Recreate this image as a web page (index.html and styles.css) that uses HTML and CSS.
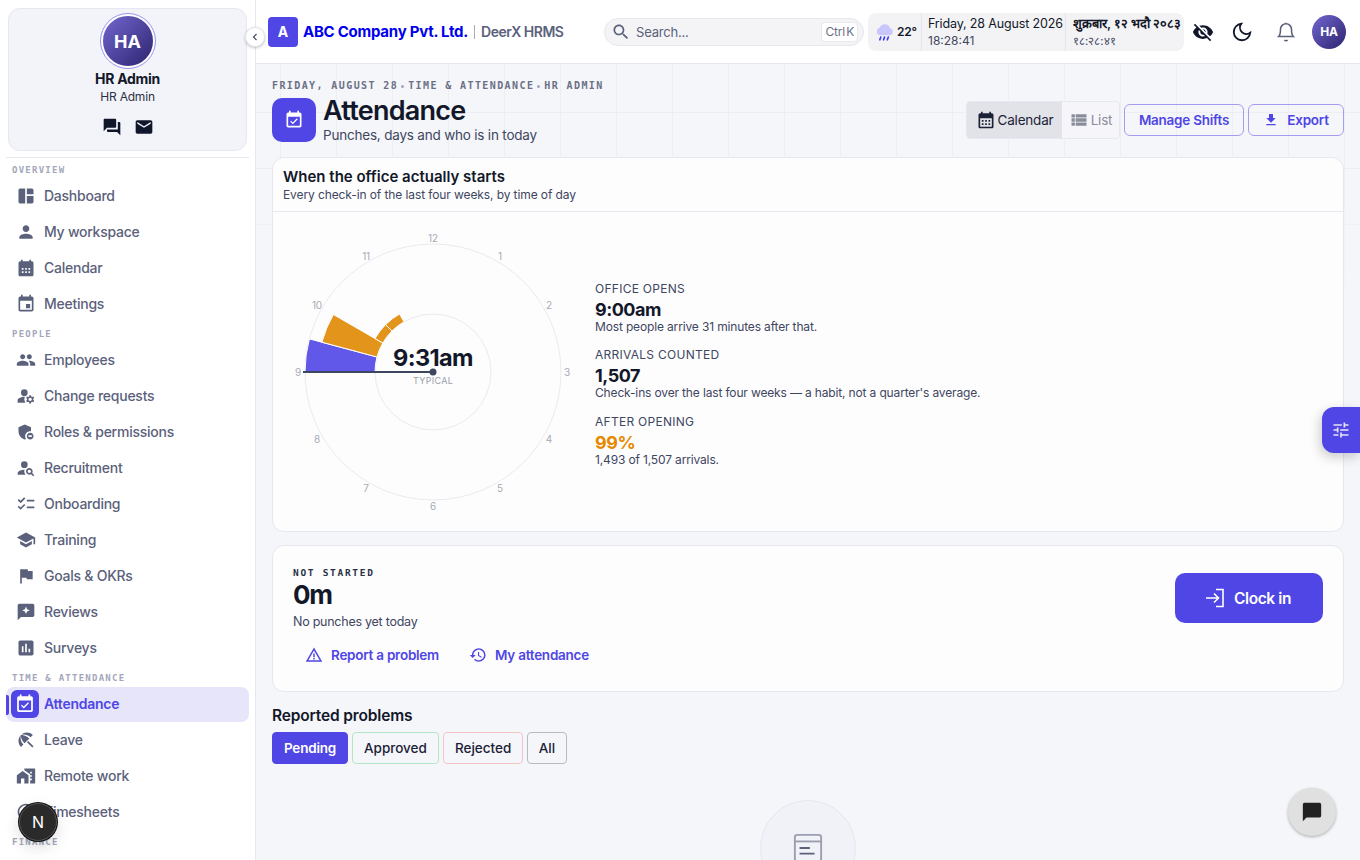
FILE: index.html
```html
<!DOCTYPE html>
<html lang="en">
<head>
<title>Attendance - DeerX HRMS</title>
<meta charset="UTF-8">
<meta name="viewport" content="width=device-width, initial-scale=1">
<link rel="stylesheet" href="styles.css">
</head>
<body>
<aside class="sidebar">
 <div class="profile">
  <div class="profile-avatar"><span>HA</span></div>
  <div class="profile-name">HR Admin</div>
  <div class="profile-role">HR Admin</div>
  <div class="profile-icons">
   <svg viewBox="0 0 24 24"><path d="M21 6h-2v9H6v2c0 .55.45 1 1 1h11l4 4V7c0-.55-.45-1-1-1zm-4 6V3c0-.55-.45-1-1-1H3c-.55 0-1 .45-1 1v14l4-4h10c.55 0 1-.45 1-1z"/></svg>
   <svg viewBox="0 0 24 24"><path d="M20 4H4c-1.1 0-1.99.9-1.99 2L2 18c0 1.1.9 2 2 2h16c1.1 0 2-.9 2-2V6c0-1.1-.9-2-2-2zm0 4l-8 5-8-5V6l8 5 8-5v2z"/></svg>
  </div>
 </div>
 <nav class="nav">
  <div class="nav-label first">OVERVIEW</div>
  <a class="nav-item"><svg class="nav-icon" viewBox="0 0 24 24"><path d="M11 21H5c-1.1 0-2-.9-2-2V5c0-1.1.9-2 2-2h6v18zm2 0h6c1.1 0 2-.9 2-2v-7h-8v9zm8-11V5c0-1.1-.9-2-2-2h-6v7h8z"/></svg>Dashboard</a>
  <a class="nav-item"><svg class="nav-icon" viewBox="0 0 24 24"><path d="M12 12c2.21 0 4-1.79 4-4s-1.79-4-4-4-4 1.79-4 4 1.79 4 4 4zm0 2c-2.67 0-8 1.34-8 4v2h16v-2c0-2.66-5.33-4-8-4z"/></svg>My workspace</a>
  <a class="nav-item"><svg class="nav-icon" viewBox="0 0 24 24"><path d="M19 4h-1V2h-2v2H8V2H6v2H5c-1.11 0-1.99.9-1.99 2L3 20c0 1.1.89 2 2 2h14c1.1 0 2-.9 2-2V6c0-1.1-.9-2-2-2zM9 14H7v-2h2v2zm4 0h-2v-2h2v2zm4 0h-2v-2h2v2zm-8 4H7v-2h2v2zm4 0h-2v-2h2v2zm4 0h-2v-2h2v2z"/></svg>Calendar</a>
  <a class="nav-item"><svg class="nav-icon" viewBox="0 0 24 24"><path d="M17 12h-5v5h5v-5zM16 1v2H8V1H6v2H5c-1.11 0-1.99.9-1.99 2L3 19c0 1.1.89 2 2 2h14c1.1 0 2-.9 2-2V5c0-1.1-.9-2-2-2h-1V1h-2zm3 18H5V8h14v11z"/></svg>Meetings</a>

  <div class="nav-label">PEOPLE</div>
  <a class="nav-item"><svg class="nav-icon" viewBox="0 0 24 24"><path d="M16 11c1.66 0 2.99-1.34 2.99-3S17.66 5 16 5c-1.66 0-3 1.34-3 3s1.34 3 3 3zm-8 0c1.66 0 2.99-1.34 2.99-3S9.66 5 8 5C6.34 5 5 6.34 5 8s1.34 3 3 3zm0 2c-2.33 0-7 1.17-7 3.5V19h14v-2.5c0-2.33-4.67-3.5-7-3.5zm8 0c-.29 0-.62.02-.97.05 1.16.84 1.97 1.97 1.97 3.45V19h6v-2.5c0-2.33-4.67-3.5-7-3.5z"/></svg>Employees</a>
  <a class="nav-item"><svg class="nav-icon" viewBox="0 0 24 24"><circle cx="10" cy="8" r="4"/><path d="M10.67 13.02c-.22-.01-.44-.02-.67-.02-2.42 0-4.68.67-6.61 1.82-.88.52-1.39 1.5-1.39 2.53V20h9.26c-.79-1.13-1.26-2.51-1.26-4 0-1.07.25-2.07.67-2.98zM20.75 16c0-.22-.03-.42-.06-.63l1.14-1.01-1-1.73-1.45.49c-.32-.27-.68-.48-1.08-.63L18 11h-2l-.3 1.49c-.4.15-.76.36-1.08.63l-1.45-.49-1 1.73 1.14 1.01c-.03.21-.06.41-.06.63s.03.42.06.63l-1.14 1.01 1 1.73 1.45-.49c.32.27.68.48 1.08.63L16 21h2l.3-1.49c.4-.15.76-.36 1.08-.63l1.45.49 1-1.73-1.14-1.01c.03-.21.06-.41.06-.63zM17 18c-1.1 0-2-.9-2-2s.9-2 2-2 2 .9 2 2-.9 2-2 2z"/></svg>Change requests</a>
  <a class="nav-item"><svg class="nav-icon" viewBox="0 0 24 24"><path d="M17 11c.34 0 .67.04 1 .09V6.27L10.5 3 3 6.27v4.91c0 4.54 3.2 8.79 7.5 9.82.55-.13 1.08-.32 1.6-.55-.69-.98-1.1-2.17-1.1-3.45 0-3.31 2.69-6 6-6z"/><path fill-rule="evenodd" d="M17 13c-2.21 0-4 1.79-4 4s1.79 4 4 4 4-1.79 4-4-1.79-4-4-4zm-2 3v2h4v-2h-4z"/></svg>Roles &amp; permissions</a>
  <a class="nav-item"><svg class="nav-icon" viewBox="0 0 24 24"><circle cx="10" cy="8" r="4"/><path d="M10.35 14.01C7.62 13.91 2 15.27 2 18v2h9.54c-2.47-2.76-1.23-5.89-1.19-5.99zM19.43 18.02c.36-.59.57-1.28.57-2.02 0-2.21-1.79-4-4-4s-4 1.79-4 4 1.79 4 4 4c.74 0 1.43-.22 2.02-.57L20.59 22 22 20.59l-2.57-2.57zM16 18c-1.1 0-2-.9-2-2s.9-2 2-2 2 .9 2 2-.9 2-2 2z"/></svg>Recruitment</a>
  <a class="nav-item"><svg class="nav-icon" viewBox="0 0 24 24"><path d="M22 7h-9v2h9V7zm0 8h-9v2h9v-2zM5.54 11 2 7.46l1.41-1.41 2.12 2.12 4.24-4.24 1.41 1.41L5.54 11zm0 8L2 15.46l1.41-1.41 2.12 2.12 4.24-4.24 1.41 1.41L5.54 19z"/></svg>Onboarding</a>
  <a class="nav-item"><svg class="nav-icon" viewBox="0 0 24 24"><path d="M5 13.18v4L12 21l7-3.82v-4L12 17l-7-3.82zM12 3 1 9l11 6 9-4.91V17h2V9L12 3z"/></svg>Training</a>
  <a class="nav-item"><svg class="nav-icon" viewBox="0 0 24 24"><path d="M14.4 6 14 4H5v17h2v-7h5.6l.4 2h7V6z"/></svg>Goals &amp; OKRs</a>
  <a class="nav-item"><svg class="nav-icon" viewBox="0 0 24 24"><path fill-rule="evenodd" d="M20 2H4c-1.1 0-2 .9-2 2v18l4-4h14c1.1 0 2-.9 2-2V4c0-1.1-.9-2-2-2zM12 5.5l1.3 3.2 3.2 1.3-3.2 1.3-1.3 3.2-1.3-3.2L7.5 10l3.2-1.3z"/></svg>Reviews</a>
  <a class="nav-item"><svg class="nav-icon" viewBox="0 0 24 24"><path d="M19 3H5c-1.1 0-2 .9-2 2v14c0 1.1.9 2 2 2h14c1.1 0 2-.9 2-2V5c0-1.1-.9-2-2-2zM9 17H7v-7h2v7zm4 0h-2V7h2v10zm4 0h-2v-4h2v4z"/></svg>Surveys</a>

  <div class="nav-label">TIME &amp; ATTENDANCE</div>
  <a class="nav-item active"><svg class="nav-icon" viewBox="-4 -4 32 32"><path d="M16.53 11.06 15.47 10l-4.88 4.88-2.12-2.12-1.06 1.06L10.59 17l5.94-5.94zM19 3h-1V1h-2v2H8V1H6v2H5c-1.11 0-1.99.9-1.99 2L3 19c0 1.1.89 2 2 2h14c1.1 0 2-.9 2-2V5c0-1.1-.9-2-2-2zm0 16H5V8h14v11z"/></svg>Attendance</a>
  <a class="nav-item"><svg class="nav-icon" viewBox="0 0 24 24"><path d="M13.127 14.56l1.43-1.43 6.44 6.443L19.57 21zm4.293-5.73l2.86-2.86c-3.95-3.95-10.35-3.96-14.3-.02 3.93-1.3 8.31-.25 11.44 2.88zM5.95 5.98c-3.94 3.95-3.93 10.35.02 14.3l2.86-2.86C5.7 14.29 4.65 9.91 5.95 5.98zm.02-.02l-.01.01c-.38 3.01 1.17 6.88 4.3 10.02l5.73-5.73c-3.13-3.13-7.01-4.68-10.02-4.3z"/></svg>Leave</a>
  <a class="nav-item"><svg class="nav-icon" viewBox="0 0 24 24"><path d="M1 11v10h5v-6h4v6h5V11L8 6zM10 3v1.97l7 5.04V11h2v2h-2v2h2v2h-2v4h6V3H10zm9 6h-2V7h2v2z"/></svg>Remote work</a>
  <a class="nav-item"><svg class="nav-icon" viewBox="0 0 24 24"><path d="M11.99 2C6.47 2 2 6.48 2 12s4.47 10 9.99 10C17.52 22 22 17.52 22 12S17.52 2 11.99 2zM12 20c-4.42 0-8-3.58-8-8s3.58-8 8-8 8 3.58 8 8-3.58 8-8 8zm.5-13H11v6l5.25 3.15.75-1.23-4.5-2.67z"/></svg>Timesheets</a>

  <div class="nav-label">FINANCE</div>
 </nav>
</aside>

<div class="main">
 <header class="topbar">
  <div class="brand">
   <span class="brand-mark">A</span>
   <span class="brand-name">ABC Company Pvt. Ltd.</span>
   <span class="brand-app">DeerX HRMS</span>
  </div>
  <div class="search">
   <svg viewBox="0 0 24 24"><path d="M15.5 14h-.79l-.28-.27C15.41 12.59 16 11.11 16 9.5 16 5.91 13.09 3 9.5 3S3 5.91 3 9.5 5.91 16 9.5 16c1.61 0 3.09-.59 4.23-1.57l.27.28v.79l5 4.99L20.49 19l-4.99-5zm-6 0C7.01 14 5 11.99 5 9.5S7.01 5 9.5 5 14 7.01 14 9.5 11.99 14 9.5 14z"/></svg>
   <span class="search-text">Search...</span>
   <kbd>Ctrl K</kbd>
  </div>
  <div class="clockbar">
   <div class="clockbar-weather">
    <svg viewBox="0 0 24 24">
     <path fill="#c9c6fb" d="M6.5 16A4.6 4.6 0 0 1 5.6 7 6.5 6.5 0 0 1 18 7.4 4.4 4.4 0 0 1 18 16z"/>
     <path fill="none" stroke="#3f3bf0" stroke-width="2" stroke-linecap="round" d="M7 18l-1.2 3.4M11.5 18l-1.2 3.4M16 18l-1.2 3.4"/>
    </svg>
    <b>22°</b>
   </div>
   <div class="clockbar-en">
    <div>Friday, 28 August 2026</div>
    <div class="clockbar-time">18:28:41</div>
   </div>
   <div class="clockbar-ne">
    <div>शुक्रबार, १२ भदौ २०८३</div>
    <div class="clockbar-time-ne">१८:२८:४१</div>
   </div>
  </div>
  <div class="top-icons">
   <svg class="icon-eye" viewBox="0 0 24 24"><path d="M12 7c2.76 0 5 2.24 5 5 0 .65-.13 1.26-.36 1.83l2.92 2.92c1.51-1.26 2.7-2.89 3.43-4.75-1.73-4.39-6-7.5-11-7.5-1.4 0-2.74.25-3.98.7l2.16 2.16C10.74 7.13 11.35 7 12 7zM2 4.27l2.28 2.28.46.46C3.08 8.3 1.78 10.02 1 12c1.73 4.39 6 7.5 11 7.5 1.55 0 3.03-.3 4.38-.84l.42.42L19.73 22 21 20.73 3.27 3 2 4.27zM7.53 9.8l1.55 1.55c-.05.21-.08.43-.08.65 0 1.66 1.34 3 3 3 .22 0 .44-.03.65-.08l1.55 1.55c-.67.33-1.41.53-2.2.53-2.76 0-5-2.24-5-5 0-.79.2-1.53.53-2.2zm4.31-.78l3.15 3.15.02-.16c0-1.66-1.34-3-3-3l-.17.01z"/></svg>
   <svg class="icon-moon" viewBox="0 0 24 24"><path d="M21 12.79A9 9 0 1 1 11.21 3 7 7 0 0 0 21 12.79z"/></svg>
   <svg class="icon-bell" viewBox="0 0 24 24"><path d="M18 9A6 6 0 0 0 6 9c0 6-2 8-2 8h16s-2-2-2-8M13.7 20.5a2 2 0 0 1-3.4 0M12 3V1.8"/></svg>
   <span class="top-avatar">HA</span>
  </div>
 </header>

 <main class="content">
  <div class="eyebrow">FRIDAY, AUGUST 28<i></i>TIME &amp; ATTENDANCE<i></i>HR ADMIN</div>
  <div class="page-head">
   <div class="page-icon">
    <svg viewBox="0 0 24 24"><path d="M16.53 11.06 15.47 10l-4.88 4.88-2.12-2.12-1.06 1.06L10.59 17l5.94-5.94zM19 3h-1V1h-2v2H8V1H6v2H5c-1.11 0-1.99.9-1.99 2L3 19c0 1.1.89 2 2 2h14c1.1 0 2-.9 2-2V5c0-1.1-.9-2-2-2zm0 16H5V8h14v11z"/></svg>
   </div>
   <div class="page-titles">
    <h1>Attendance</h1>
    <p>Punches, days and who is in today</p>
   </div>
   <div class="page-actions">
    <div class="toggle">
     <span class="toggle-btn on"><svg viewBox="0 0 24 24"><path d="M19 4h-1V2h-2v2H8V2H6v2H5c-1.11 0-1.99.9-1.99 2L3 20c0 1.1.89 2 2 2h14c1.1 0 2-.9 2-2V6c0-1.1-.9-2-2-2zm0 16H5V10h14v10zM9 14H7v-2h2v2zm4 0h-2v-2h2v2zm4 0h-2v-2h2v2zm-8 4H7v-2h2v2zm4 0h-2v-2h2v2zm4 0h-2v-2h2v2z"/></svg>Calendar</span>
     <span class="toggle-btn off"><svg viewBox="0 0 24 24"><path d="M3 14h4v-4H3v4zm0 5h4v-4H3v4zM3 9h4V5H3v4zm5 5h13v-4H8v4zm0 5h13v-4H8v4zM8 5v4h13V5H8z"/></svg>List</span>
    </div>
    <a class="btn-outline shifts">Manage Shifts</a>
    <a class="btn-outline export"><svg viewBox="0 0 24 24"><path d="M19 9h-4V3H9v6H5l7 7 7-7zM5 18v2h14v-2H5z"/></svg>Export</a>
   </div>
  </div>

  <section class="card">
   <div class="card-head">
    <h2>When the office actually starts</h2>
    <p>Every check-in of the last four weeks, by time of day</p>
   </div>
   <div class="card-body">
    <svg class="dial" viewBox="0 0 300 300" width="300" height="300">
     <circle class="ring" cx="150" cy="150" r="128"/>
     <circle class="ring" cx="150" cy="150" r="58"/>
     <path class="wedge purple" d="M92 150L22 150A128 128 0 0 1 26.4 116.9L94 135A58 58 0 0 0 92 150Z"/>
     <path class="wedge amber" d="M94 135L38.9 120.2A115 115 0 0 1 50.4 92.5L99.8 121A58 58 0 0 0 94 135Z"/>
     <path class="wedge amber" d="M99.8 121L92 116.5A67 67 0 0 1 102.6 102.6L109 109A58 58 0 0 0 99.8 121Z"/>
     <path class="wedge amber" d="M109 109L102.6 102.6A67 67 0 0 1 116.5 92L121 99.8A58 58 0 0 0 109 109Z"/>
     <line class="hand" x1="20" y1="150" x2="150" y2="150"/>
     <circle class="hand-dot" cx="150" cy="150" r="3.5"/>
     <g class="hours">
      <text x="150" y="20">12</text><text x="217" y="38">1</text><text x="266" y="87">2</text>
      <text x="284" y="154">3</text><text x="266" y="221">4</text><text x="217" y="270">5</text>
      <text x="150" y="288">6</text><text x="83" y="270">7</text><text x="34" y="221">8</text>
      <text x="15" y="154">9</text><text x="34" y="87">10</text><text x="83" y="38">11</text>
     </g>
     <text class="dial-time" x="150" y="144">9:31am</text>
     <text class="dial-sub" x="150" y="162">TYPICAL</text>
    </svg>
    <div class="stats">
     <div class="stat">
      <div class="stat-label">OFFICE OPENS</div>
      <div class="stat-value">9:00am</div>
      <div class="stat-note">Most people arrive 31 minutes after that.</div>
     </div>
     <div class="stat">
      <div class="stat-label">ARRIVALS COUNTED</div>
      <div class="stat-value">1,507</div>
      <div class="stat-note">Check-ins over the last four weeks — a habit, not a quarter's average.</div>
     </div>
     <div class="stat">
      <div class="stat-label">AFTER OPENING</div>
      <div class="stat-value late">99%</div>
      <div class="stat-note">1,493 of 1,507 arrivals.</div>
     </div>
    </div>
   </div>
  </section>

  <section class="card punch">
   <div class="punch-info">
    <div class="punch-state">NOT STARTED</div>
    <div class="punch-total">0m</div>
    <div class="punch-note">No punches yet today</div>
    <div class="punch-links">
     <a><svg viewBox="0 0 24 24"><path d="M1 21h22L12 2 1 21zm3.47-2L12 5.99 19.53 19H4.47zM13 16h-2v2h2zm0-6h-2v5h2z"/></svg>Report a problem</a>
     <a><svg viewBox="0 0 24 24"><path d="M13 3c-4.97 0-9 4.03-9 9H1l3.89 3.89.07.14L9 12H6c0-3.87 3.13-7 7-7s7 3.13 7 7-3.13 7-7 7c-1.93 0-3.68-.79-4.94-2.06l-1.42 1.42C8.27 19.99 10.51 21 13 21c4.97 0 9-4.03 9-9s-4.03-9-9-9zm-1 5v5l4.28 2.54.72-1.21-3.5-2.08V8H12z"/></svg>My attendance</a>
    </div>
   </div>
   <a class="clock-in"><svg viewBox="0 0 24 24"><path d="M13 3.5h7v17h-7M3 12h12.5M11 7.5l4.5 4.5-4.5 4.5"/></svg>Clock in</a>
  </section>

  <h3 class="problems-title">Reported problems</h3>
  <div class="filters">
   <span class="filter pending">Pending</span>
   <span class="filter approved">Approved</span>
   <span class="filter rejected">Rejected</span>
   <span class="filter all">All</span>
  </div>
  <div class="empty">
   <div class="empty-circle">
    <svg viewBox="0 0 32 32"><rect x="2" y="2" width="28" height="28" rx="2.5"/><path d="M2 9h28"/><path class="empty-bars" d="M7 16h11M7 22h16"/></svg>
   </div>
  </div>
 </main>
</div>

<button class="collapse"><svg viewBox="0 0 24 24"><path d="M15 6l-6 6 6 6"/></svg></button>
<div class="side-tab"><svg viewBox="0 0 24 24"><path d="M3 17v2h6v-2H3zM3 5v2h10V5H3zm10 16v-2h8v-2h-8v-2h-2v6h2zM7 9v2H3v2h4v2h2V9H7zm14 4v-2H11v2h10zm-6-4h2V7h4V5h-4V3h-2v6z"/></svg></div>
<div class="chat-fab"><svg viewBox="0 0 24 24"><path d="M20 2H4c-1.1 0-2 .9-2 2v18l4-4h14c1.1 0 2-.9 2-2V4c0-1.1-.9-2-2-2z"/></svg></div>
<div class="dev-badge">N</div>
</body>
</html>
```

FILE: styles.css
```css
html, body { height: 100%; overflow: hidden; }
body { margin: 0; display: flex; background: #f5f6fa; color: #121829;
       font: 14px Inter, "Noto Sans CJK SC", sans-serif; letter-spacing: -0.2px; }
h1, h2, h3, p { margin: 0; }
a { text-decoration: none; }
svg { display: block; fill: currentColor; }

/* sidebar */
.sidebar { width: 243px; flex: none; background: #fff; border-right: 1px solid #e6e7ef;
           overflow: hidden; padding: 8px 6px 0; }
.profile { margin: 0 2px; height: 141px; background: #f3f4fa; border: 1px solid #e6e7ef;
           border-radius: 12px; display: flex; flex-direction: column; align-items: center; }
.profile-avatar { width: 50px; height: 50px; margin-top: 5px; border-radius: 50%;
                  border: 2px solid #fff; outline: 1px solid #9d94f2;
                  background: linear-gradient(135deg, #7367cf, #2c2470);
                  color: #fff; font-size: 18px; font-weight: 700; letter-spacing: 0;
                  display: flex; align-items: center; justify-content: center; }
.profile-name { font-size: 14px; font-weight: 700; margin-top: 2px; line-height: 18px; letter-spacing: -0.3px; }
.profile-role { font-size: 12px; line-height: 18px; color: #2b3145; }
.profile-icons { display: flex; gap: 12px; margin-top: 11px; color: #10172a; }
.profile-icons svg { width: 20px; height: 20px; }

.nav { border-top: 1px solid #e6e7ef; margin-top: 6px; padding-top: 4px; }
.nav-label { font: 700 9px/16px "DejaVu Sans Mono", monospace; letter-spacing: 1.25px;
             color: #a3a7bb; padding-left: 6px; margin-top: 4px; }
.nav-label.first { margin-top: 0; }
.nav-item { position: relative; display: flex; align-items: center; height: 36px; gap: 8px;
            padding: 0 0 2px 10px; box-sizing: border-box; color: #5b617b; font-weight: 500;
            border-radius: 8px; letter-spacing: -0.25px; }
.nav-icon { width: 20px; height: 20px; flex: none; margin-top: 2px; }
.nav-item.active { height: 35px; margin-top: 1px; padding-bottom: 3px; background: #e6e5f9; color: #4f46e5; font-weight: 600; }
.nav-item.active:before { content: ''; position: absolute; left: 0; top: 8px; width: 3px;
                          height: 20px; background: #4f46e5; border-radius: 0 2px 2px 0; }
.nav-item.active .nav-icon { width: 28px; height: 28px; margin: 2px -3px 0 -5px; color: #fff;
                             background: #4f46e5; border-radius: 6px; }

/* top bar */
.main { flex: 1; min-width: 0; display: flex; flex-direction: column; }
.topbar { height: 63px; flex: none; background: #fff; border-bottom: 1px solid #e6e7ef;
          display: flex; align-items: center; padding: 0 14px 0 12px; }
.brand { display: flex; align-items: center; width: 336px; flex: none; }
.brand-mark { width: 30px; height: 30px; border-radius: 4px; background: #4f46e5; color: #fff;
              font-weight: 700; font-size: 14px; display: flex; align-items: center;
              justify-content: center; margin-right: 5px; }
.brand-name { color: #0000ee; font-weight: 700; font-size: 15px; letter-spacing: -0.25px; }
.brand-app { color: #5b617b; font-weight: 600; font-size: 14px; margin-left: 6px;
             padding-left: 6px; border-left: 1px solid #aab; line-height: 14px; letter-spacing: -0.5px; }
.search { width: 260px; height: 28px; box-sizing: border-box; border: 1px solid #e6e7ef; border-radius: 14px;
          background: #f4f4f6; display: flex; align-items: center; padding: 0 5px 0 6px;
          color: #5b617b; flex: none; }
.search svg { width: 20px; height: 20px; margin-right: 5px; }
.search-text { flex: 1; font-size: 13px; }
kbd { font: 12px Inter, sans-serif; background: #fff; border: 1px solid #e6e7ef; border-radius: 4px;
      padding: 0 3px; height: 18px; line-height: 18px; color: #6b7085; word-spacing: -2px; }
.clockbar { margin-left: 4px; height: 38px; width: 316px; background: #f3f3f5; border-radius: 8px;
            display: flex; align-items: center; flex: none; }
.clockbar-weather { width: 54px; height: 100%; display: flex; align-items: center; gap: 2px;
                    padding-left: 7px; box-sizing: border-box; border-right: 1px solid #e4e4ea; flex: none; }
.clockbar-weather svg { width: 20px; height: 20px; }
.clockbar-weather b { font-size: 12px; font-weight: 600; }
.clockbar-en { width: 144px; height: 100%; box-sizing: border-box; padding: 2px 0 0 6px; flex: none;
               font-size: 12.5px; line-height: 18px; border-right: 1px solid #e4e4ea; letter-spacing: -0.15px; }
.clockbar-time { font-size: 12px; color: #3f4660; letter-spacing: 0; line-height: 16px; }
.clockbar-ne { padding: 0 0 0 7px; font-size: 12.8px; font-weight: 600; line-height: 18px; white-space: nowrap; letter-spacing: 0; }
.clockbar-time-ne { font-size: 11.5px; font-weight: 400; line-height: 16px; color: #3f4660; }
.top-icons { display: flex; align-items: center; flex: 1; margin-left: 8px; }
.top-icons svg { width: 22px; height: 22px; flex: none; }
.icon-eye { color: #10172a; }
.icon-moon { fill: none; stroke: #10172a; stroke-width: 2; margin-left: 17px; }
.icon-bell { fill: none; stroke: #5b617b; stroke-width: 1.7; margin-left: 22px; }
.top-avatar { width: 34px; height: 34px; border-radius: 50%; margin-left: 15px; flex: none;
              background: linear-gradient(135deg, #7367cf, #2c2470); color: #fff;
              font-size: 12px; font-weight: 700; display: flex; align-items: center; justify-content: center; }

/* page */
.content { flex: 1; position: relative; padding: 15px 16px 0; overflow: hidden; }
.content:before { content: ''; position: absolute; left: 0; right: 0; top: 0; height: 260px;
                  background-image: linear-gradient(#edeef4 1px, transparent 1px),
                                    linear-gradient(90deg, #edeef4 1px, transparent 1px);
                  background-size: 56px 56px; background-position: 24px -8px;
                  -webkit-mask-image: linear-gradient(#000 40%, transparent); }
.content > * { position: relative; }
.eyebrow { font: 700 10px/14px "DejaVu Sans Mono", monospace; letter-spacing: 1.4px; color: #6a7085;
           display: flex; align-items: center; }
.eyebrow i { width: 3px; height: 3px; border-radius: 50%; background: #a3a7bb; margin: 0 4px 0 3px; }
.page-head { display: flex; align-items: center; height: 44px; margin-top: 5px; }
.page-icon { width: 44px; height: 44px; border-radius: 10px; background: #4f46e5; color: #fff;
             display: flex; align-items: center; justify-content: center; flex: none; }
.page-icon svg { width: 20px; height: 20px; }
.page-titles { margin-left: 7px; align-self: flex-start; }
.page-titles h1 { font-size: 27px; line-height: 26px; font-weight: 600; letter-spacing: -0.75px; }
.page-titles p { font-size: 13.5px; line-height: 20px; color: #3f4660; margin-top: 1px; }
.page-actions { margin-left: auto; display: flex; align-items: center; gap: 4px; }
.toggle { display: flex; height: 38px; box-sizing: border-box; border: 1px solid #e6e7ef; border-radius: 4px; overflow: hidden; background: #f6f6fa; }
.toggle-btn { display: flex; align-items: center; justify-content: center; gap: 2px; color: #8a8d9c; font-size: 13.5px; }
.toggle-btn svg { width: 20px; height: 20px; }
.toggle-btn.on { width: 95px; background: #e2e3e9; color: #1c2236; }
.toggle-btn.off { width: 57px; }
.btn-outline { height: 32px; box-sizing: border-box; display: flex; align-items: center; justify-content: center;
               border: 1px solid #a49ef0; border-radius: 6px; color: #4f46e5; font-size: 13.5px; font-weight: 600; letter-spacing: -0.25px; }
.shifts { width: 120px; }
.export { width: 96px; gap: 8px; }
.export svg { width: 16px; height: 16px; }

.card { background: #fdfdfe; border: 1px solid #e6e7ef; border-radius: 12px; margin-top: 15px; }
.card-head { height: 54px; box-sizing: border-box; padding: 10px 10px 0; border-bottom: 1px solid #e6e7ef; }
.card-head h2 { font-size: 15px; line-height: 18px; font-weight: 600; letter-spacing: 0; }
.card-head p { font-size: 12px; line-height: 18px; color: #3f4660; letter-spacing: -0.1px; }
.card-body { display: flex; align-items: center; padding: 10px 10px 9px; gap: 12px; height: 319px; box-sizing: border-box; }
.dial { flex: none; }
.ring { fill: none; stroke: #ebebee; stroke-width: 1; }
.wedge { stroke: #fff; stroke-width: 1; }
.purple { fill: #6158ea; }
.amber { fill: #e3951b; }
.hand { stroke: #3f4660; stroke-width: 2; }
.hand-dot { fill: #3f4660; }
.hours text { font: 10px Inter, sans-serif; fill: #a7aab6; text-anchor: middle; }
.dial-time { font: 700 23.5px Inter, sans-serif; fill: #121829; text-anchor: middle; letter-spacing: -0.6px; }
.dial-sub { font: 9px Inter, sans-serif; fill: #9b9ea9; text-anchor: middle; letter-spacing: 0.3px; }
.stats { display: flex; flex-direction: column; gap: 13.5px; padding-top: 3px; }
.stat-label { font-size: 12px; line-height: 16px; color: #3f4660; letter-spacing: 0.27px; }
.stat-value { font-size: 18px; line-height: 22px; font-weight: 700; letter-spacing: -0.5px; margin: 2px 0 -1px; }
.stat-value.late { color: #e58a00; }
.stat-note { font-size: 12px; line-height: 14px; color: #3f4660; letter-spacing: -0.15px; }

.punch { margin-top: 13px; height: 125px; display: flex; align-items: flex-start; justify-content: space-between;
         padding: 20px 20px 0; }
.punch-state { font: 700 9.5px/14px "DejaVu Sans Mono", monospace; letter-spacing: 1.7px; color: #2b3145; }
.punch-total { font-size: 26px; line-height: 28px; font-weight: 700; letter-spacing: -1.2px; margin-top: 1px; }
.punch-note { font-size: 12.5px; line-height: 18px; color: #3f4660; margin-top: 4px; letter-spacing: -0.25px; }
.punch-links { display: flex; gap: 30px; margin-top: 12px; padding-left: 12px; }
.punch-links a { display: flex; align-items: center; gap: 8px; color: #4f46e5; font-size: 13.5px; font-weight: 600; line-height: 24px; letter-spacing: -0.25px; }
.punch-links svg { width: 18px; height: 18px; }
.clock-in { margin-top: 7px; width: 144px; height: 50px; padding-right: 4px; border-radius: 10px; background: #4f46e5; color: #fff;
            display: flex; align-items: center; justify-content: center; gap: 7px; font-size: 15.5px; font-weight: 600; letter-spacing: -0.4px; }
.clock-in svg { width: 24px; height: 24px; fill: none; stroke: #fff; stroke-width: 1.6; }

.problems-title { font-size: 15.5px; line-height: 20px; font-weight: 600; margin-top: 14px; letter-spacing: -0.15px; }
.filters { display: flex; gap: 4px; margin-top: 6px; }
.filter { height: 32px; box-sizing: border-box; line-height: 30px; border: 1px solid; border-radius: 4px; padding: 0 11px; font-size: 13.5px; font-weight: 500; letter-spacing: 0; }
.pending { width: 76px; padding: 0; text-align: center; background: #4f46e5; border-color: #4f46e5; color: #fff; font-weight: 600; letter-spacing: -0.2px; }
.approved { border-color: #b6e5c4; color: #1c2236; }
.rejected { border-color: #f5c4c2; color: #1c2236; }
.all { padding: 0 10.5px; border-color: #b8bac2; color: #1c2236; }
.empty { display: flex; justify-content: center; margin-top: 36px; }
.empty-circle { width: 94px; height: 94px; border: 1px solid #e6e7ef; border-radius: 50%; background: #f1f2f8;
                display: flex; align-items: center; justify-content: center; }
.empty-circle svg { width: 30px; height: 30px; fill: none; stroke: #9a9eb0; stroke-width: 2; }
.empty-bars { stroke: #5b617b; }

/* things floating over the page */
.collapse { position: absolute; left: 245px; top: 27px; width: 20px; height: 20px; padding: 0; border: 1px solid #e6e7ef;
            border-radius: 50%; background: #fff; box-shadow: 0 1px 3px rgba(0,0,0,.25);
            display: flex; align-items: center; justify-content: center; }
.collapse svg { width: 12px; height: 12px; fill: none; stroke: #3f4660; stroke-width: 2.4; }
.side-tab { position: absolute; right: 0; top: 407px; width: 38px; height: 46px; background: #4f46e5; color: #e6e5f9;
            border-radius: 12px 0 0 12px; box-shadow: -2px 4px 12px rgba(0,0,0,.2);
            display: flex; align-items: center; justify-content: center; }
.side-tab svg { width: 20px; height: 20px; }
.chat-fab { position: absolute; left: 1288px; top: 788px; width: 48px; height: 48px; border-radius: 50%; background: #e0e0e0;
            box-shadow: 0 1px 3px rgba(0,0,0,.3); color: #212121; display: flex; align-items: center; justify-content: center; }
.chat-fab svg { width: 22px; height: 22px; }
.dev-badge { position: absolute; left: 19px; top: 803px; width: 36px; height: 36px; border: 1px solid #555; border-radius: 50%;
             background: #2a2a2a; color: #fff; font-size: 16px; font-weight: 400; display: flex; align-items: center;
             justify-content: center; box-shadow: 0 0 0 1px #111, 0 6px 16px rgba(0,0,0,.15); }
```
